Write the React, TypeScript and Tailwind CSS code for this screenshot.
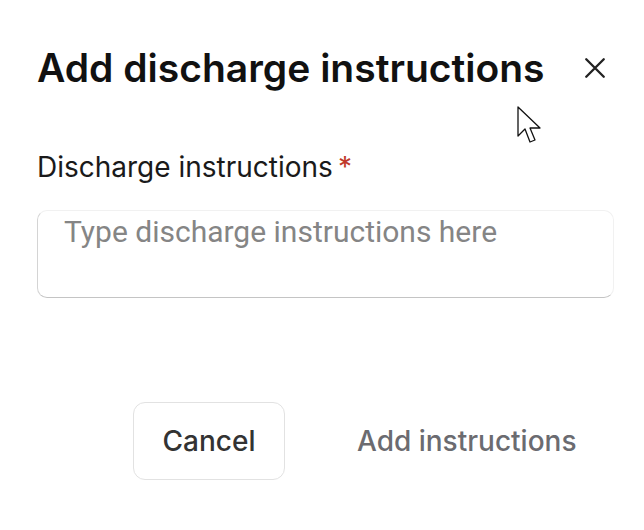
export default function App() {
  return (
    <div className="relative w-[644px] h-[530px] bg-white font-['Inter',sans-serif] text-[#111111] overflow-hidden">
      <div className="flex flex-col px-[37px] pt-[44px]">
        <div className="flex items-center justify-between">
          <h1 className="text-[39px] font-semibold leading-[48px]">Add discharge instructions</h1>
          <button className="mr-[-3px] text-[#222]">
            <svg width="30" height="30" viewBox="0 0 24 24" fill="none" stroke="currentColor" strokeWidth="1.9" strokeLinecap="round">
              <path d="M5 5l14 14M19 5L5 19" />
            </svg>
          </button>
        </div>

        <label className="mt-[57px] text-[28px] leading-[36px] text-[#1a1a1a]">
          Discharge instructions<span className="ml-[5px] text-[#c0392b]">*</span>
        </label>

        {/* textarea */}
        <div className="mt-[25px] mr-[-7px] h-[88px] rounded-[10px] border border-[#f1f1f1] border-l-[#d4d4d4] border-b-[#c4c4c4] px-[26px] pt-[3px]">
          <div className="text-[30px] leading-[36px] text-[#858585] font-['Roboto',sans-serif]">Type discharge instructions here</div>
        </div>

        <div className="mt-[104px] flex items-center gap-[72px] pl-[96px]">
          <button className="h-[78px] w-[152px] rounded-[12px] border border-[#e2e2e2] text-[28px] font-medium text-[#333]">
            Cancel
          </button>
          <button className="text-[28px] font-medium text-[#6b6b70]">Add instructions</button>
        </div>
      </div>

      <svg className="absolute left-[517px] top-[106px]" width="26" height="40" viewBox="0 0 26 40">
        <path d="M1 1 L1 30 L8 23 L13 36 L18 34 L13 22 L23 22 Z" fill="white" stroke="#111" strokeWidth="1.3" strokeLinejoin="round" />
      </svg>
    </div>
  );
}
